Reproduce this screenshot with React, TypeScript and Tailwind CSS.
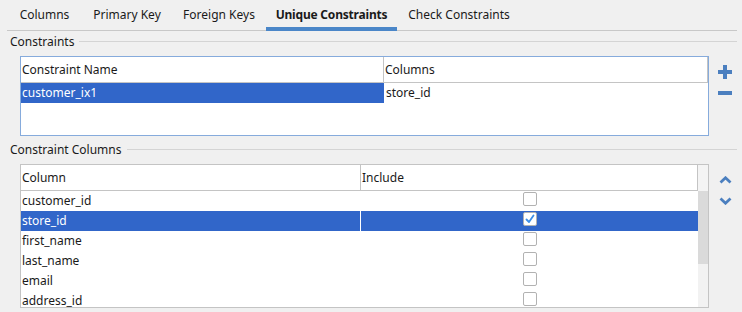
import React from "react";

const tabs = [
  { label: "Columns", w: "w-[75px]" },
  { label: "Primary Key", w: "w-[90px]" },
  { label: "Foreign Keys", w: "w-[94px]" },
  { label: "Unique Constraints", w: "w-[131px]", active: true },
  { label: "Check Constraints", w: "w-[124px]" },
];

const columns = [
  { name: "customer_id", on: false },
  { name: "store_id", on: true, selected: true },
  { name: "first_name", on: false },
  { name: "last_name", on: false },
  { name: "email", on: false },
  { name: "address_id", on: false },
];

function GroupLabel({ text }: { text: string }) {
  return (
    <div className="flex h-4 pl-[10px] pr-[5px]">
      <span className="leading-4">{text}</span>
      <div className="flex-1 ml-[5px] mt-[7px] h-px bg-[#d4d4d4]" />
    </div>
  );
}

function Checkbox({ on }: { on: boolean }) {
  return (
    <div className="w-[14px] h-[14px] rounded-[2px] border border-[#b2b2b2] bg-white flex items-center justify-center">
      {on && (
        <svg width="12" height="12" viewBox="0 0 12 12">
          <path d="M2.5 6.5 L5 9 L9.5 2.5" fill="none" stroke="#3d8ee6" strokeWidth="1.8" strokeLinecap="round" strokeLinejoin="round" />
        </svg>
      )}
    </div>
  );
}

export default function App() {
  return (
    <div
      className="w-[742px] h-[312px] bg-[#f0f0f0] text-[#1a1a1a] text-[12px] overflow-hidden flex flex-col"
      style={{ fontFamily: '"Noto Sans", "Open Sans", sans-serif' }}
    >
      {/* Tab strip */}
      <div className="flex h-[31px] pl-[7px] pr-[5px]">
        {tabs.map((t) => (
          <div
            key={t.label}
            className={`${t.w} flex justify-center pt-[7px] ${
              t.active ? "border-b-[4px] border-[#4a86c8] font-bold tracking-[-0.2px]" : "border-b border-[#c8c8c8]"
            }`}
          >
            <span className="leading-4 whitespace-nowrap">{t.label}</span>
          </div>
        ))}
        <div className="flex-1 border-b border-[#c8c8c8]" />
      </div>

      {/* Constraints */}
      <div className="mt-[3px]">
        <GroupLabel text="Constraints" />
      </div>
      <div className="flex mt-[6px]">
        <div className="ml-[20px] w-[689px] h-[80px] border border-[#86abdc] bg-white flex flex-col">
          <div className="flex h-[26px] border-b border-[#c4c4c4]">
            <div className="w-[363px] border-r border-[#c4c4c4] flex items-center pl-px">Constraint Name</div>
            <div className="flex-1 border-r border-[#c4c4c4] flex items-center pl-px">Columns</div>
          </div>
          <div className="flex h-[20px]">
            <div className="w-[363px] bg-[#3166c9] text-white flex items-center pl-px">customer_ix1</div>
            <div className="flex-1 flex items-center pl-[2px]">store_id</div>
          </div>
        </div>
        <div className="flex flex-col pl-[9px] pt-[9px] gap-[12px]">
          <svg width="14" height="14" viewBox="0 0 14 14">
            <rect x="0" y="5" width="14" height="4" fill="#4b7fbf" />
            <rect x="5" y="0" width="4" height="14" fill="#4b7fbf" />
          </svg>
          <svg width="14" height="4" viewBox="0 0 14 4">
            <rect x="0" y="0" width="14" height="4" fill="#4b7fbf" />
          </svg>
        </div>
      </div>

      {/* Constraint Columns */}
      <div className="mt-[6px]">
        <GroupLabel text="Constraint Columns" />
      </div>
      <div className="flex mt-[6px]">
        <div className="ml-[20px] w-[689px] h-[144px] border border-[#c4c4c4] bg-white flex overflow-hidden">
          <div className="flex-1 flex flex-col">
            <div className="flex h-[26px] shrink-0 border-b border-[#c4c4c4]">
              <div className="w-[340px] border-r border-[#c4c4c4] flex items-center pl-px">Column</div>
              <div className="flex-1 border-r border-[#c4c4c4] flex items-center pl-px">Include</div>
            </div>
            {columns.map((c) => (
              <div
                key={c.name}
                className={`flex h-[20px] shrink-0 ${c.selected ? "bg-[#3166c9] text-white" : ""}`}
              >
                <div className="w-[339px] flex items-center pl-px">{c.name}</div>
                <div className="flex-1 border-l border-white flex justify-center pt-px">
                  <Checkbox on={c.on} />
                </div>
              </div>
            ))}
          </div>
          <div className="w-[10px] flex flex-col bg-[#f2f2f2]">
            <div className="h-[26px] shrink-0 bg-[#f4f4f4]" />
            <div className="h-[73px] bg-[#dadada]" />
          </div>
        </div>
        <div className="flex flex-col pl-[10px] pt-[12px] gap-[13px]">
          <svg width="13" height="8" viewBox="0 0 13 8">
            <polyline points="1.5,6.5 6.5,1.8 11.5,6.5" fill="none" stroke="#4b7fbf" strokeWidth="2.8" />
          </svg>
          <svg width="13" height="8" viewBox="0 0 13 8">
            <polyline points="1.5,1.5 6.5,6.2 11.5,1.5" fill="none" stroke="#4b7fbf" strokeWidth="2.8" />
          </svg>
        </div>
      </div>
    </div>
  );
}
